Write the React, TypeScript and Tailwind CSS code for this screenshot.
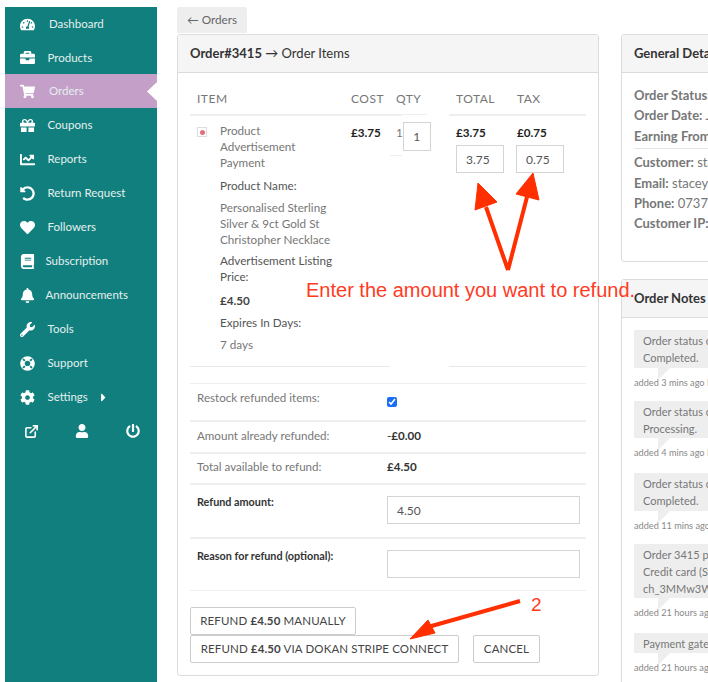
import type { ReactNode } from "react"
import { ExternalLink } from "lucide-react"
import {
  FaBell,
  FaBook,
  FaBriefcase,
  FaCaretRight,
  FaChartLine,
  FaCog,
  FaGift,
  FaHeart,
  FaLifeRing,
  FaPowerOff,
  FaShoppingCart,
  FaTachometerAlt,
  FaUndoAlt,
  FaUser,
  FaWrench,
} from "react-icons/fa"

const navItems = [
  { label: "Dashboard", icon: <FaTachometerAlt />, gap: "ml-[14px]", h: "h-[34px]" },
  { label: "Products", icon: <FaBriefcase />, gap: "ml-[12.5px]", h: "h-[33px]" },
  { label: "Orders", icon: <FaShoppingCart />, gap: "ml-[14px]", h: "h-[34px]", active: true },
  { label: "Coupons", icon: <FaGift />, gap: "ml-[12.5px]", h: "h-[34px]" },
  { label: "Reports", icon: <FaChartLine />, gap: "ml-[12.5px]", h: "h-[34px]" },
  { label: "Return Request", icon: <FaUndoAlt />, gap: "ml-[12.5px]", h: "h-[34px]" },
  { label: "Followers", icon: <FaHeart />, gap: "ml-[12.5px]", h: "h-[34px]" },
  { label: "Subscription", icon: <FaBook />, gap: "ml-[10.5px]", h: "h-[34px]" },
  { label: "Announcements", icon: <FaBell />, gap: "ml-[10.5px]", h: "h-[34px]" },
  { label: "Tools", icon: <FaWrench />, gap: "ml-[12.5px]", h: "h-[34px]" },
  { label: "Support", icon: <FaLifeRing />, gap: "ml-[12.5px]", h: "h-[34px]" },
  { label: "Settings", icon: <FaCog />, gap: "ml-[12.5px]", h: "h-[34px]", caret: true },
]

const notes = [
  { lines: ["Order status changed from Processing to", "Completed."], added: "added 3 mins ago", by: "Dokan", box: "h-[38px]", mt: "mt-[12px]" },
  { lines: ["Order status changed from Completed to", "Processing."], added: "added 4 mins ago", by: "Dokan", box: "h-[37px]", mt: "mt-[12px]" },
  { lines: ["Order status changed from Processing to", "Completed."], added: "added 11 mins ago", by: "Dokan", box: "h-[38px]", mt: "mt-[14px]" },
  { lines: ["Order 3415 paid by customer using", "Credit card (Stripe) with charge id", "ch_3MMw3WLkdIwHu7ix0"], added: "added 21 hours ago", by: "Dokan", box: "h-[54px]", mt: "mt-[12px]" },
  { lines: ["Payment gateway processed"], added: "added 21 hours ago", by: "Dokan", box: "h-[20px]", mt: "mt-[14px]" },
]

const inputClass =
  "border border-[#d4d4d4] bg-white text-[12px] text-[#555] outline-none"

const Card = ({ title, className, children }: { title: ReactNode; className: string; children: ReactNode }) => (
  <section className={`rounded-[3px] border border-[#dcdcdc] bg-white ${className}`}>
    <h2 className="flex h-[38px] items-center whitespace-nowrap border-b border-[#dcdcdc] bg-[#f5f5f5] pl-[12px] text-[13px] text-[#333]">
      {title}
    </h2>
    {children}
  </section>
)

const Sidebar = () => (
  <aside className="ml-[5px] mt-[7px] h-[675px] w-[152px] shrink-0 bg-[#117f7d] text-[11.5px] text-[#e4f0ef]">
    {navItems.map((item) => (
      <div
        key={item.label}
        className={`relative flex items-center pl-[14px] ${item.h} ${item.active ? "bg-[#c49fc8]" : ""}`}
      >
        <span className="flex w-[16px] justify-center text-[15px] text-white">{item.icon}</span>
        <span className={item.gap}>{item.label}</span>
        {item.caret && <FaCaretRight className="ml-[9px] text-[13px] text-white" />}
        {item.active && (
          <span className="absolute right-0 top-[8px] h-[19px] w-[10px] bg-white [clip-path:polygon(100%_0,0_50%,100%_100%)]" />
        )}
      </div>
    ))}
    <div className="flex h-[34px] items-center text-white">
      <ExternalLink size={15} strokeWidth={2.6} className="ml-[19px]" />
      <FaUser className="ml-[36px] text-[14px]" />
      <FaPowerOff className="ml-[37px] text-[14px]" />
    </div>
  </aside>
)

const OrderItems = () => (
  <div className="px-[12px] text-[11.7px] leading-[16px] text-[#777]">
    <div className="grid h-[41px] grid-cols-[154px_45px_60px_61px_76px] items-end pb-[7px] text-[12px] tracking-[0.5px] text-[#777]">
      <span className="pl-[7px]">ITEM</span>
      <span className="pl-[7px]">COST</span>
      <span className="pl-[7px]">QTY</span>
      <span className="pl-[7px]">TOTAL</span>
      <span className="pl-[7px]">TAX</span>
    </div>
    <div className="flex items-start">
      <div className="h-[2px] w-[212px] bg-[#eee]" />
      <div className="h-px w-[25px] bg-[#eee]" />
      <div className="ml-[22px] h-[2px] w-[137px] bg-[#eee]" />
    </div>
    <div className="grid grid-cols-[154px_45px_60px_61px_76px] pt-[6px]">
      <div className="flex pl-[7px]">
        <span className="mt-[5px] flex h-[10px] w-[10px] shrink-0 items-center justify-center border border-[#ddd]">
          <span className="h-[5px] w-[5px] rounded-full bg-[#e0707a]" />
        </span>
        <div className="ml-[13px] w-[118px] shrink-0 whitespace-nowrap">
          <p>Product<br />Advertisement<br />Payment</p>
          <p className="mt-[7px] text-[#555]">Product Name:</p>
          <p className="mt-[6px]">Personalised Sterling<br />Silver &amp; 9ct Gold St<br />Christopher Necklace</p>
          <p className="mt-[5px] text-[#555]">Advertisement Listing<br />Price:</p>
          <p className="mt-[8px] font-bold text-[#444]">£4.50</p>
          <p className="mt-[6px] text-[#555]">Expires In Days:</p>
          <p className="mt-[6px]">7 days</p>
        </div>
      </div>
      <div className="pl-[7px] pt-[2px] font-bold text-[#222]">£3.75</div>
      <div className="pl-[7px]">
        <div className="flex items-start pt-[2px]">
          <span>1</span>
          <input readOnly value="1" className={`${inputClass} -mt-[2px] h-[29px] w-[28px] text-center`} />
        </div>
        <div className="ml-[-6px] mt-[4px] h-px w-[12px] bg-[#eee]" />
      </div>
      <div className="pl-[7px] pt-[2px]">
        <div className="font-bold text-[#222]">£3.75</div>
        <input readOnly value="3.75" className={`${inputClass} mt-[5px] h-[28px] w-[48px] pl-[9px]`} />
      </div>
      <div className="pl-[7px] pt-[2px]">
        <div className="font-bold text-[#222]">£0.75</div>
        <input readOnly value="0.75" className={`${inputClass} -ml-px mt-[5px] h-[28px] w-[48px] pl-[9px]`} />
      </div>
    </div>
    <div className="mt-[14px] flex">
      <div className="h-px w-[200px] bg-[#e8e8e8]" />
      <div className="ml-[59px] h-px w-[137px] bg-[#e8e8e8]" />
    </div>
  </div>
)

const RefundRow = ({ label, bold, className, children }: { label: string; bold?: boolean; className: string; children: ReactNode }) => (
  <div className={`flex border-[#eee] pl-[7px] ${className}`}>
    <span className={`w-[190px] shrink-0 ${bold ? "-mt-[2px] text-[10.8px] font-bold text-[#333]" : ""}`}>{label}</span>
    {children}
  </div>
)

const RefundForm = () => (
  <div className="mx-[12px] mt-[16px] text-[11.6px] leading-[16px] text-[#777]">
    <RefundRow label="Restock refunded items:" className="h-[37px] border-t pt-[6px]">
      <input type="checkbox" readOnly checked className="mt-[7px] h-[10px] w-[10px] accent-[#1a6ef5]" />
    </RefundRow>
    <RefundRow label="Amount already refunded:" className="h-[32px] items-center border-t-2 pb-[2px]">
      <span className="font-bold text-[#333]"><span className="font-normal">-</span>£0.00</span>
    </RefundRow>
    <RefundRow label="Total available to refund:" className="h-[31px] items-center border-t-2 pb-[4px]">
      <span className="font-bold text-[#333]">£4.50</span>
    </RefundRow>
    <RefundRow label="Refund amount:" bold className="h-[54px] border-t-2 pt-[11px]">
      <input readOnly value="4.50" className={`${inputClass} h-[28px] w-[193px] pl-[9px]`} />
    </RefundRow>
    <RefundRow label="Reason for refund (optional):" bold className="h-[53px] border-t-2 pt-[11px]">
      <input readOnly className={`${inputClass} h-[28px] w-[193px]`} />
    </RefundRow>
    <div className="border-t border-[#eee] pt-[16px] text-[11.5px] tracking-[0.13px] text-[#444]">
      <button className="block h-[28px] w-[166px] rounded-[2px] border border-[#ccc] bg-white">
        REFUND <b>£4.50</b> MANUALLY
      </button>
      <div className="flex">
        <button className="h-[28px] w-[269px] rounded-[2px] border border-[#ccc] bg-white">
          REFUND <b>£4.50</b> VIA DOKAN STRIPE CONNECT
        </button>
        <button className="ml-[14px] h-[28px] w-[67px] rounded-[2px] border border-[#ccc] bg-white">CANCEL</button>
      </div>
    </div>
  </div>
)

const GeneralDetails = () => (
  <Card
    className="h-[228px] w-[120px]"
    title={<b className="font-bold">General Details</b>}
  >
    <div className="whitespace-nowrap px-[12px] pt-[12px] text-[13px] leading-[20.4px] text-[#777]">
      <p><b>Order Status:</b> Completed</p>
      <p><b>Order Date:</b> January 2023</p>
      <p><b>Earning From:</b> Order</p>
      <div className="mb-[3px] mt-[2px] h-px w-[120px] bg-[#e4e4e4]" />
      <p><b>Customer:</b> stacey</p>
      <p><b>Email:</b> stacey@example.com</p>
      <p><b>Phone:</b> 07377000000</p>
      <p><b>Customer IP:</b> 127.0.0.1</p>
    </div>
  </Card>
)

const OrderNotes = () => (
  <Card
    className="mt-[17px] h-[420px] w-[120px]"
    title={<b className="font-bold">Order Notes</b>}
  >
    <div className="px-[12px] text-[11px] text-[#777]">
      {notes.map((note) => (
        <div key={note.added + note.mt} className={note.mt}>
          <div className={`relative flex w-[200px] flex-col justify-center whitespace-nowrap bg-[#eee] pl-[9px] leading-[17px] ${note.box}`}>
            {note.lines.map((line) => (
              <span key={line}>{line}</span>
            ))}
            <span className="absolute left-[24px] top-full h-[12px] w-[12px] bg-[#eee] [clip-path:polygon(0_0,100%_0,0_100%)]" />
          </div>
          <p className="mt-[9px] whitespace-nowrap text-[9.2px] leading-[12px] text-[#888]">
            {note.added} <span className="text-[#117f7d]">{note.by}</span>
          </p>
        </div>
      ))}
    </div>
  </Card>
)

const Annotations = () => (
  <>
    <svg className="pointer-events-none absolute left-0 top-0" width="708" height="682" fill="#ff2f00" stroke="#ff2f00">
      <path d="M508 270 L486 207 M508 270 L527 197" fill="none" strokeWidth="4" />
      <path d="M478 183 L497 202 L475 210 Z M533 173 L539 200 L516 194 Z" strokeWidth="1" />
      <path d="M520 601 L428 627" fill="none" strokeWidth="4" />
      <path d="M410 639 L428 620 L435 633 Z" strokeWidth="1" />
    </svg>
    <span className="absolute left-[306px] top-[278px] whitespace-nowrap font-['Liberation_Sans',sans-serif] text-[20px] leading-[24px] text-[#ff3b1f]">
      Enter the amount you want to refund.
    </span>
    <span className="absolute left-[531px] top-[594px] font-['Liberation_Sans',sans-serif] text-[19px] leading-[22px] text-[#ff3b1f]">
      2
    </span>
  </>
)

const App = () => (
  <div className="relative flex h-[682px] w-[708px] overflow-hidden bg-white font-['Lato',sans-serif]">
    <Sidebar />
    <main className="ml-[20px] mt-[7px] w-[422px] shrink-0">
      <div className="flex h-[26px] w-[70px] items-center justify-center rounded-t-[3px] bg-[#eee] text-[11.7px] text-[#666]">
        ← Orders
      </div>
      <Card
        className="mt-px h-[642px]"
        title={<><b className="font-bold">Order#3415</b>&nbsp;→ Order Items</>}
      >
        <OrderItems />
        <RefundForm />
      </Card>
    </main>
    <div className="ml-[22px] mt-[34px] shrink-0">
      <GeneralDetails />
      <OrderNotes />
    </div>
    <Annotations />
  </div>
)

export default App
